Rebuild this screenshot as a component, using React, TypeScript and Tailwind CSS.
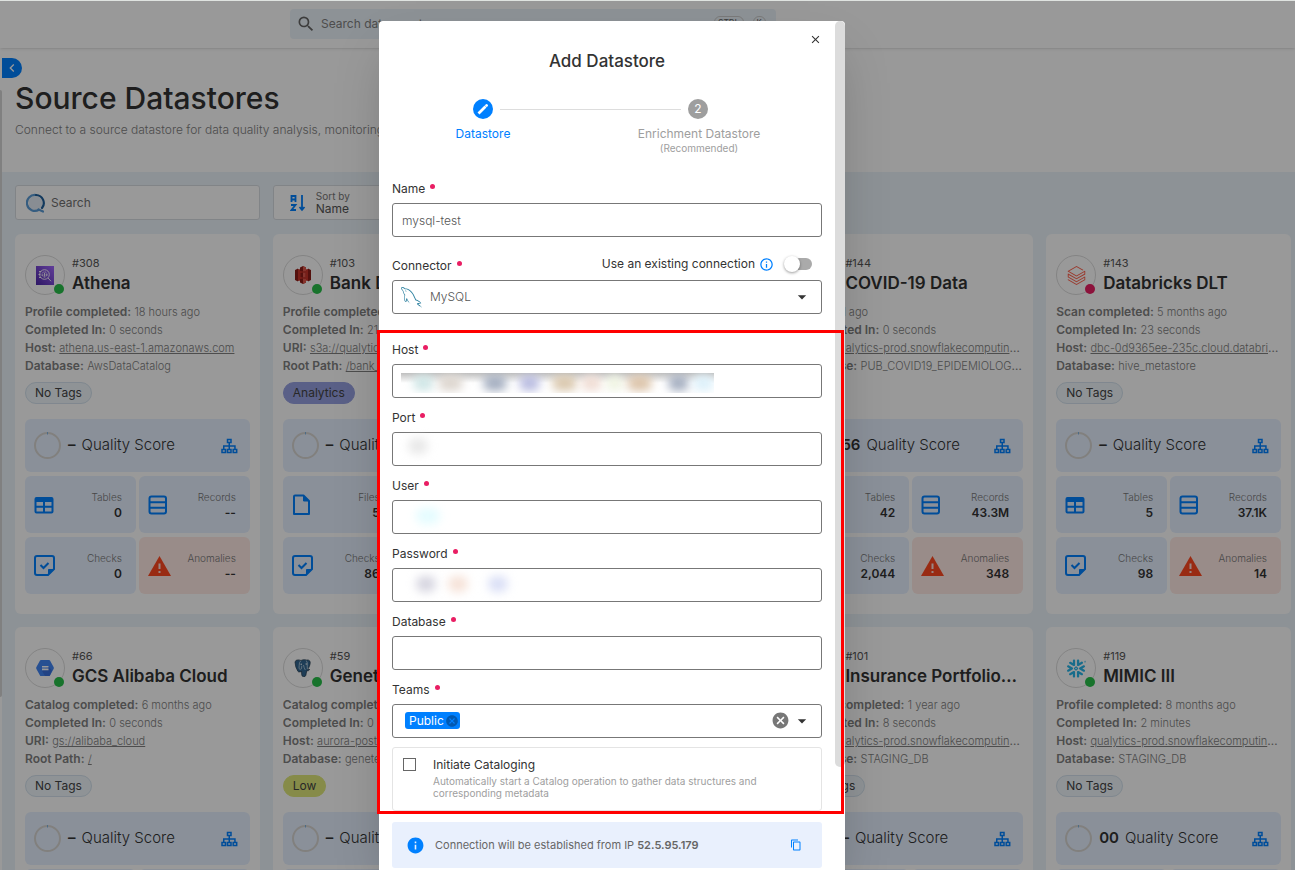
import type { ReactNode } from "react";
import { MdArrowDropDown, MdCancel, MdChevronLeft, MdClose, MdContentCopy, MdInfo, MdInfoOutline, MdSearch } from "react-icons/md";
import { SiDatabricks, SiSnowflake } from "react-icons/si";
import { GrMysql } from "react-icons/gr";

type Store = {
  id: string;
  name: string;
  logo: ReactNode;
  ok?: boolean;
  meta: { label: string; value: string; link?: boolean }[];
  tag: string;
  tagStyle?: string;
  score?: string;
  first: string;
  counts: string[];
};

const stores: (Store | null)[] = [
  {
    id: "#308",
    name: "Athena",
    logo: <AthenaLogo />,
    ok: true,
    meta: [
      { label: "Profile completed:", value: "18 hours ago" },
      { label: "Completed In:", value: "0 seconds" },
      { label: "Host:", value: "athena.us-east-1.amazonaws.com", link: true },
      { label: "Database:", value: "AwsDataCatalog" },
    ],
    tag: "No Tags",
    first: "Tables",
    counts: ["0", "--", "0", "--"],
  },
  {
    id: "#103",
    name: "Bank Dataset",
    logo: <S3Logo />,
    ok: true,
    meta: [
      { label: "Profile completed:", value: "2 days ago" },
      { label: "Completed In:", value: "21 seconds" },
      { label: "URI:", value: "s3a://qualytics-demo", link: true },
      { label: "Root Path:", value: "/bank_dataset", link: true },
    ],
    tag: "Analytics",
    tagStyle: "border-[#97a0e2] bg-[#97a0e2]",
    first: "Files",
    counts: ["5", "--", "86", "--"],
  },
  null,
  {
    id: "#144",
    name: "COVID-19 Data",
    logo: <SiSnowflake size={19} className="text-[#29b5e8]" />,
    ok: true,
    meta: [
      { label: "Sync:", value: "1d ago" },
      { label: "Completed In:", value: "0 seconds" },
      { label: "Host:", value: "qualytics-prod.snowflakecomputing.com", link: true },
      { label: "Database:", value: "PUB_COVID19_EPIDEMIOLOGICAL" },
    ],
    tag: "Low",
    score: "56",
    first: "Tables",
    counts: ["42", "43.3M", "2,044", "348"],
  },
  {
    id: "#143",
    name: "Databricks DLT",
    logo: <SiDatabricks size={19} className="text-[#ff5f4b]" />,
    meta: [
      { label: "Scan completed:", value: "5 months ago" },
      { label: "Completed In:", value: "23 seconds" },
      { label: "Host:", value: "dbc-0d9365ee-235c.cloud.databricks.com", link: true },
      { label: "Database:", value: "hive_metastore" },
    ],
    tag: "No Tags",
    first: "Tables",
    counts: ["5", "37.1K", "98", "14"],
  },
  {
    id: "#66",
    name: "GCS Alibaba Cloud",
    logo: <GcsLogo />,
    ok: true,
    meta: [
      { label: "Catalog completed:", value: "6 months ago" },
      { label: "Completed In:", value: "0 seconds" },
      { label: "URI:", value: "gs://alibaba_cloud", link: true },
      { label: "Root Path:", value: "/", link: true },
    ],
    tag: "No Tags",
    first: "Files",
    counts: ["0", "--", "0", "--"],
  },
  {
    id: "#59",
    name: "Genetech",
    logo: <PostgresLogo />,
    ok: true,
    meta: [
      { label: "Catalog completed:", value: "1 month ago" },
      { label: "Completed In:", value: "0 seconds" },
      { label: "Host:", value: "aurora-postgresql.cluster", link: true },
      { label: "Database:", value: "genetech" },
    ],
    tag: "Low",
    tagStyle: "border-[#dfe87a] bg-[#dfe87a]",
    first: "Tables",
    counts: ["0", "--", "0", "--"],
  },
  null,
  {
    id: "#101",
    name: "Insurance Portfolios Data",
    logo: <SiSnowflake size={19} className="text-[#29b5e8]" />,
    ok: true,
    meta: [
      { label: "Profile completed:", value: "1 year ago" },
      { label: "Completed In:", value: "8 seconds" },
      { label: "Host:", value: "qualytics-prod.snowflakecomputing.com", link: true },
      { label: "Database:", value: "STAGING_DB" },
    ],
    tag: "No Tags",
    first: "Tables",
    counts: ["0", "--", "0", "--"],
  },
  {
    id: "#119",
    name: "MIMIC III",
    logo: <SiSnowflake size={19} className="text-[#29b5e8]" />,
    ok: true,
    meta: [
      { label: "Profile completed:", value: "8 months ago" },
      { label: "Completed In:", value: "2 minutes" },
      { label: "Host:", value: "qualytics-prod.snowflakecomputing.com", link: true },
      { label: "Database:", value: "STAGING_DB" },
    ],
    tag: "No Tags",
    score: "00",
    first: "Tables",
    counts: ["0", "--", "0", "--"],
  },
];

function AthenaLogo() {
  return (
    <svg width="18" height="19" viewBox="0 0 18 19">
      <defs>
        <linearGradient id="athena" x1="0" y1="1" x2="1" y2="0">
          <stop offset="0" stopColor="#4d27a8" />
          <stop offset="1" stopColor="#a166ff" />
        </linearGradient>
      </defs>
      <rect width="18" height="19" fill="url(#athena)" />
      <g fill="none" stroke="#fff" strokeWidth="0.9">
        <circle cx="8.5" cy="8.5" r="4.8" />
        <circle cx="8.5" cy="8.5" r="2.6" strokeDasharray="2 1" />
        <path d="M6.8 9.8V8.3M8.5 10.5V6.8M10.2 9.8V7.8M12 12l3 3.2M3 5.5h2M2.5 8.5h2M3 11.5h2" />
      </g>
    </svg>
  );
}

function S3Logo() {
  return (
    <svg width="18" height="20" viewBox="0 0 18 20">
      <path d="M1 5l3-1.500v13L1 15zM17 5l-3-1.500v13l3-1.500z" fill="#8c1d18" />
      <path d="M4 4l5 1 5-1v12l-5-1-5 1z" fill="#c8342b" />
      <path d="M6 2.500L9 1l3 1.500V6L9 6.600 6 6zM6 14l3-.6 3 .6v3.500L9 19l-3-1.500zM6.500 8L9 7.600l2.500.4v4L9 12.400 6.500 12z" fill="#8c1d18" />
      <path d="M9 1l3 1.500V6L9 6.600zM9 7.600l2.500.4v4L9 12.400zM9 13.400l3 .6v3.500L9 19z" fill="#e0584c" />
    </svg>
  );
}

function GcsLogo() {
  return (
    <svg width="18" height="16" viewBox="0 0 18 16">
      <path d="M5 0h8q.7 0 1 .6L17.700 7.300q.3.700 0 1.400L14 15.400q-.3.600-1 .6H5q-.7 0-1-.6L.3 8.700q-.3-.7 0-1.400L4 .6Q4.300 0 5 0z" fill="#4285f4" />
      <path d="M12 6l4 4.500-2.300 5.200L13 16H9l-3-5z" fill="#3a70dc" />
      <path d="M6 6h6.500v1.600H6zM6 8.600h6.500v1.600H6z" fill="#fff" />
    </svg>
  );
}

function PostgresLogo() {
  return (
    <svg width="17" height="18" viewBox="0 0 17 18">
      <path
        d="M1 3Q1.500.8 4 .9q1.700 0 3 .6Q8.500.6 10.500.7q1 0 1.800.3Q14.500.5 15.800 2q.9 1.500 0 4-.8 2.600-2.100 4.300l2 .2q-.8 1.500-3 1.400-.5 2.500-.8 4.300-.4 1.500-2.300 1.500-1.800-.2-1.900-2l-.2-3.700q-.9 1.500-1.800.9-1 .4-1.800-.6Q1.200 8.200 1 3z"
        fill="#336791"
        stroke="#22384a"
        strokeWidth="0.7"
      />
      <path
        d="M6.800 1.800Q5 3.300 5.200 6.500L5 9.500q1 1.800 2.500.2l.3-3M12.200 1.500q2 2.500 1 5.500l.2 3.200M9.500 6q.5 3 1.800 5"
        fill="none"
        stroke="#b9cfdf"
        strokeWidth="0.8"
      />
      <circle cx="7.2" cy="5.200" r="0.700" fill="#fff" />
      <circle cx="12.200" cy="5" r="0.700" fill="#fff" />
    </svg>
  );
}

function TreeIcon() {
  return (
    <svg width="17" height="16" viewBox="0 0 17 16" fill="none" stroke="currentColor" strokeWidth="1.500" className="text-[#0080ff]">
      <path d="M6.500 1.500h3.500v3H6.500zM1 11.500h3.500v3H1zM6.500 11.500h3.500v3H6.500zM12.200 11.500h3.500v3h-3.500zM8.250 4.500v7M2.750 11.500V8h11.200v3.500" />
    </svg>
  );
}

function TableIcon() {
  return (
    <svg width="20" height="20" viewBox="0 0 20 20" className="text-[#0080ff]">
      <path d="M2.500 2h15Q19.500 2 19.500 4v12.500q0 2-2 2h-15q-2 0-2-2V4q0-2 2-2zM2.500 7v3.800h6.500V7zM11 7v3.800h6.500V7zM2.500 12.700v3.800h6.500v-3.800zM11 12.700v3.800h6.500v-3.800z" fill="currentColor" fillRule="evenodd" />
    </svg>
  );
}

function RecordsIcon() {
  return (
    <svg width="20" height="20" viewBox="0 0 20 20" fill="none" stroke="currentColor" strokeWidth="2" className="text-[#0080ff]">
      <rect x="1.500" y="1.500" width="16.500" height="17" rx="2" />
      <path d="M1.500 7.200H18M1.500 12.800H18" />
    </svg>
  );
}

function FileIcon() {
  return (
    <svg width="20" height="22" viewBox="0 0 20 22" fill="none" stroke="currentColor" strokeWidth="2" className="text-[#0080ff]">
      <path d="M3 1.500h8.500l5.500 5.500v13H2V2.500q0-1 1-1z" strokeLinejoin="round" />
      <path d="M11.500 2v5H17z" fill="currentColor" strokeWidth="1" />
    </svg>
  );
}

function ChecksIcon() {
  return (
    <svg width="21" height="21" viewBox="0 0 21 21" fill="none" stroke="currentColor" strokeWidth="2" className="text-[#0080ff]">
      <path d="M3 1h15q2 0 2 2V14l-6 6H3q-2 0-2-2V3q0-2 2-2z" />
      <path d="M14.500 19.500v-5h5z" fill="currentColor" strokeWidth="1" />
      <path d="M6.500 10l3 3L14.500 8" />
    </svg>
  );
}

function WarningIcon() {
  return (
    <svg width="23" height="20" viewBox="0 0 23 20">
      <path d="M11.500 0L23 20H0z" fill="#ff4820" />
      <path d="M10.500 7.500h2v5.500h-2zM10.500 15h2v2h-2z" fill="#ffe0da" />
    </svg>
  );
}

function Tile({ icon, label, value, warn }: { icon: ReactNode; label: string; value: string; warn?: boolean }) {
  return (
    <div className={`flex h-[57px] items-center justify-between rounded-md pl-[9px] pr-[14px] ${warn ? "bg-[#ffe9e4]" : "bg-[#e6f0ff]"}`}>
      {icon}
      <div className="text-right">
        <p className="text-[10px] leading-4 font-light text-[#777]">{label}</p>
        <p className="text-xs leading-4 font-semibold text-[#333]">{value}</p>
      </div>
    </div>
  );
}

function StoreCard({ store }: { store: Store }) {
  const [a, b, c, d] = store.counts;
  return (
    <article className="min-w-0 rounded-md bg-white px-[10px] pt-[21px] pb-5">
      <div className="flex gap-[7px]">
        <div className="relative flex size-10 shrink-0 items-center justify-center rounded-full border border-[#dcdcdc]">
          {store.logo}
          <span className={`absolute right-0 bottom-0 size-[10px] rounded-full ${store.ok ? "bg-[#28c04a]" : "bg-[#e91e63]"}`} />
        </div>
        <div className="min-w-0">
          <p className="text-[11px] leading-4 text-[#555]">{store.id}</p>
          <h2 className="truncate text-[17px] leading-6 font-semibold text-[#333]">{store.name}</h2>
        </div>
      </div>
      <dl className="mt-2 text-xs leading-[18px] text-[#808080]">
        {store.meta.map((m) => (
          <div key={m.label} className="h-[18px] truncate">
            <dt className="inline font-semibold">{m.label}</dt>{" "}
            <dd className="inline text-[11px] font-light">{m.link ? <a href="#" className="underline">{m.value}</a> : m.value}</dd>
          </div>
        ))}
      </dl>
      <div className="mt-[7px] flex">
        <span className={`flex h-[22px] items-center rounded-full border px-[9px] text-xs text-[#444] ${store.tagStyle ?? "border-[#d5e2ee] bg-[#eef5fb]"}`}>
          {store.tag}
        </span>
      </div>
      <div className="mt-[15px] flex h-[53px] items-center rounded-md bg-[#e6f0ff] pr-3 pl-[9px]">
        <svg width="27" height="27" viewBox="0 0 27 27" fill="none" strokeWidth="2" className="shrink-0">
          <circle cx="13.500" cy="13.500" r="12.500" stroke="#d8d5d2" />
          <path d="M13.500 0v2.500" stroke="#7fb2e0" strokeWidth="1" />
        </svg>
        <span className="ml-[7px] text-[15px] font-semibold text-[#333]">{store.score ?? "–"}</span>
        <span className="ml-[6px] flex-1 text-[15px] font-light text-[#333]">Quality Score</span>
        <TreeIcon />
      </div>
      <div className="mt-1 grid grid-cols-2 gap-x-[3px] gap-y-1">
        <Tile icon={store.first === "Files" ? <FileIcon /> : <TableIcon />} label={store.first} value={a} />
        <Tile icon={<RecordsIcon />} label="Records" value={b} />
        <Tile icon={<ChecksIcon />} label="Checks" value={c} />
        <Tile icon={<WarningIcon />} label="Anomalies" value={d} warn />
      </div>
    </article>
  );
}

function Label({ htmlFor, children }: { htmlFor: string; children: string }) {
  return (
    <label htmlFor={htmlFor} className="flex h-[18px] items-center gap-[5px] pb-px text-xs text-[#333]">
      {children}
      <span className="mb-[5px] size-[5px] rounded-full bg-[#e91e63]" />
    </label>
  );
}

const box = "h-[34px] w-full rounded-[3px] border border-[#777] bg-white";

function Field({ id, label, mask }: { id: string; label: string; mask?: ReactNode }) {
  return (
    <div>
      <Label htmlFor={id}>{label}</Label>
      <div className="relative mt-[5px]">
        <input id={id} className={`${box} px-[9px] text-xs`} />
        {mask}
      </div>
    </div>
  );
}

function Dot({ className }: { className: string }) {
  return <span className={`h-4 rounded-full blur-[5px] ${className}`} />;
}

function AddDatastore() {
  return (
    <section role="dialog" aria-label="Add Datastore" className="relative flex w-[466px] rounded-t bg-white shadow-2xl">
      <form className="flex min-w-0 flex-1 flex-col px-[13px]">
        <button type="button" aria-label="Close" className="mt-3 self-end text-[#333]">
          <MdClose size={13} />
        </button>
        <h1 className="mt-[3px] text-center text-[17px] leading-6 font-medium text-[#333]">Add Datastore</h1>

        <div className="mt-[26px] flex items-center pr-[114px] pl-[81px]">
          <span className="flex size-5 items-center justify-center rounded-full bg-[#0080ff]">
            <svg width="12" height="12" viewBox="0 0 12 12">
              <path d="M2.500 9.500L7.500 4.500" stroke="#fff" strokeWidth="2.800" strokeLinecap="square" />
              <path d="M9.500 2.500l.1-.1" stroke="#fff" strokeWidth="2.800" strokeLinecap="round" />
            </svg>
          </span>
          <span className="mx-[7px] h-px flex-1 bg-[#ddd]" />
          <span className="flex size-5 items-center justify-center rounded-full bg-[#9e9e9e] text-xs text-white">2</span>
        </div>
        <div className="mt-[7px] flex justify-between pr-8 text-center text-xs leading-4">
          <p className="w-[182px] text-[#0080ff]">Datastore</p>
          <p className="w-[182px] text-[#9e9e9e]">
            Enrichment Datastore
            <span className="block text-[10px] leading-3">(Recommended)</span>
          </p>
        </div>

        <div className="mt-[26px]">
          <Label htmlFor="name">Name</Label>
          <input id="name" defaultValue="mysql-test" className={`${box} mt-[5px] px-[9px] text-xs font-light text-[#555]`} />
        </div>

        <div className="mt-5">
          <div className="flex items-center justify-between">
            <Label htmlFor="connector">Connector</Label>
            <label className="flex h-[18px] items-center pr-[10px] pb-1 text-xs text-[#333]">
              Use an existing connection
              <MdInfoOutline size={15} className="ml-1 text-[#0080ff]" />
              <input type="checkbox" role="switch" className="peer sr-only" />
              <span className="relative ml-3 h-3 w-[26px] rounded-full bg-[#aaa] before:absolute before:-top-[2px] before:-left-[2px] before:size-4 before:rounded-full before:bg-white before:shadow-[0_1px_3px_rgba(0,0,0,0.4)]" />
            </label>
          </div>
          <div className="relative mt-[5px] flex items-center">
            <select id="connector" className={`${box} appearance-none pl-[37px] text-xs font-light text-[#555]`}>
              <option>MySQL</option>
            </select>
            <GrMysql size={21} className="pointer-events-none absolute left-[9px] text-[#2a7f9e]" />
            <MdArrowDropDown size={20} className="pointer-events-none absolute right-[10px] text-[#333]" />
          </div>
        </div>

        <div className="mt-[27px] flex flex-col gap-[11px]">
          <Field
            id="host"
            label="Host"
            mask={
              <div className="absolute top-[9px] left-[9px] flex h-5 w-[313px] items-center gap-1 overflow-hidden bg-linear-to-b from-black/25 to-transparent to-50% pl-3">
                <Dot className="w-6 bg-[#cfe6e6]" />
                <Dot className="mr-4 w-7 bg-[#ddd6cf]" />
                <Dot className="mr-2 w-7 bg-[#a4aec0]" />
                <Dot className="mr-2 w-6 bg-[#b8bbe0]" />
                <Dot className="w-7 bg-[#dac8ae]" />
                <Dot className="w-6 bg-[#f0ddd4]" />
                <Dot className="w-5 bg-[#eef3e0]" />
                <Dot className="mr-3 w-7 bg-[#dcc4aa]" />
                <Dot className="w-6 bg-[#a4aec0]" />
                <Dot className="w-6 bg-[#dcf0fa]" />
              </div>
            }
          />
          <Field id="port" label="Port" mask={<Dot className="absolute top-[6px] left-4 w-5 bg-[#e8e8e8]" />} />
          <Field id="user" label="User" mask={<Dot className="absolute top-2 left-6 w-6 bg-[#e4fcff]" />} />
          <Field
            id="password"
            label="Password"
            mask={
              <div className="absolute top-2 left-6 flex gap-3">
                <Dot className="w-5 bg-[#d6d5e0]" />
                <Dot className="mr-2 w-5 bg-[#f6e2d8]" />
                <Dot className="w-5 bg-[#dadff6]" />
              </div>
            }
          />
          <Field id="database" label="Database" />
          <div>
            <Label htmlFor="teams">Teams</Label>
            <div className={`${box} mt-[5px] flex items-center pr-[9px] pb-px pl-3`}>
              <span className="flex h-[17px] items-center gap-px rounded-[3px] bg-[#0080ff] pr-px pl-1 text-xs text-white">
                Public
                <button type="button" aria-label="Remove Public" className="text-[#0059b3]">
                  <MdCancel size={14} />
                </button>
              </span>
              <input id="teams" className="h-full min-w-0 flex-1 outline-none" />
              <button type="button" aria-label="Clear teams" className="mr-[2px] text-[#777]">
                <MdCancel size={19} />
              </button>
              <MdArrowDropDown size={20} className="text-[#333]" />
            </div>
          </div>
        </div>

        <div className="mt-[9px] flex h-16 gap-[17px] rounded-[3px] border border-[#e4e4e4] px-[10px] pt-[9px]">
          <input id="catalog" type="checkbox" className="mt-px size-[13px] shrink-0 appearance-none border border-[#666]" />
          <div>
            <label htmlFor="catalog" className="block text-xs leading-4 text-[#333]">
              Initiate Cataloging
            </label>
            <p className="mt-[2px] text-[10px] leading-3 text-[#9e9e9e]">
              Automatically start a Catalog operation to gather data structures and corresponding metadata
            </p>
          </div>
        </div>

        <div className="mt-[11px] flex h-[46px] items-center rounded-[3px] bg-[#e9f0fd] px-[14px] text-[11px] text-[#666]">
          <MdInfo size={19} className="text-[#0080ff]" />
          <p className="ml-[10px] flex-1">
            Connection will be established from IP <b className="font-semibold">52.5.95.179</b>
          </p>
          <button type="button" aria-label="Copy IP" className="mr-[6px] text-[#0080ff]">
            <MdContentCopy size={12} />
          </button>
        </div>
      </form>
      <div className="w-[10px]">
        <div className="h-[746px] rounded-full bg-[#dcdcdc]" />
      </div>
      <div className="pointer-events-none absolute top-[309px] right-px -left-[2px] h-[484px] border-3 border-[#ff0000]" />
    </section>
  );
}

export default function App() {
  return (
    <div className="relative h-screen overflow-hidden border-t border-[#dfe3e0] bg-[#ecf4fa] font-['Inter',sans-serif]">
      <header className="relative flex h-[47px] bg-white pt-2 pl-[290px] shadow">
        <div className="flex h-[30px] w-[486px] items-center gap-[5px] rounded bg-[#ecf4fa] pr-[10px] pl-[6px] text-[#666]">
          <MdSearch size={20} />
          <input aria-label="Search data assets" placeholder="Search data assets" className="flex-1 text-xs placeholder:text-[#808080]" />
          <kbd className="mr-1 rounded-md border border-[#ccc] px-[3px] text-[9px]">CTRL</kbd>
          <kbd className="rounded-md border border-[#ccc] px-[3px] text-[9px]">K</kbd>
        </div>
      </header>

      <div className="flex">
        <div className="w-[2px] shrink-0 bg-white pt-[42px]">
          <div className="h-[607px] rounded-r bg-[#d5d5d5]" />
        </div>
        <main className="min-w-0 flex-1">
          <div className="h-[124px] bg-white pt-[10px]">
            <button aria-label="Collapse sidebar" className="flex h-5 w-5 items-center justify-center rounded-r-full bg-[#0080ff] text-white">
              <MdChevronLeft size={16} />
            </button>
            <h1 className="mt-[2px] pl-[13px] text-[30px] leading-9 font-medium text-[#333]">Source Datastores</h1>
            <p className="mt-[5px] pl-[13px] text-xs leading-[18px] font-light text-[#808080]">
              Connect to a source datastore for data quality analysis, monitoring, and anomaly detection
            </p>
          </div>

          <div className="grid grid-cols-5 gap-[13px] pt-[13px] pr-1 pl-[13px]">
            <div className="flex h-[35px] items-center gap-[5px] rounded-[3px] border border-[#d8dde2] bg-white px-[10px]">
              <svg width="20" height="20" viewBox="0 0 20 20" fill="none" strokeWidth="2.200" strokeLinecap="round">
                <circle cx="9.500" cy="10" r="7" fill="#e3ecf5" />
                <path d="M13 16.800A8 8 0 1 1 10 2" stroke="#5b9bd5" />
                <path d="M10 2a8 8 0 0 1 6 13" stroke="#1f5f9c" />
                <path d="M12.500 16.500l4.500 2" stroke="#5b9bd5" />
              </svg>
              <input aria-label="Search datastores" placeholder="Search" className="min-w-0 flex-1 text-xs placeholder:text-[#707070]" />
            </div>
            <button className="flex h-[35px] items-center gap-[10px] rounded-[3px] border border-[#d8dde2] bg-white px-4 text-left text-[#555]">
              <svg width="16" height="18" viewBox="0 0 16 18" fill="none" stroke="#0080ff" strokeWidth="1.800">
                <path d="M1.500 8V2h4v6M1.500 5.500h4M1 11h4.500L1.500 16H6M12 1v14M9.500 13l2.500 2.800L14.500 13" />
              </svg>
              <span>
                <span className="block text-[10px] leading-3 text-[#777]">Sort by</span>
                <span className="block text-xs leading-[14px]">Name</span>
              </span>
            </button>
          </div>

          <div className="grid grid-cols-5 gap-[13px] pt-[14px] pr-1 pl-[13px]">
            {stores.map((s, i) => (s ? <StoreCard key={s.id} store={s} /> : <div key={i} className="rounded-md bg-white" />))}
          </div>
        </main>
      </div>

      <div className="absolute inset-0 flex justify-center bg-black/40 pt-5 pr-[71px]">
        <AddDatastore />
      </div>
    </div>
  );
}
